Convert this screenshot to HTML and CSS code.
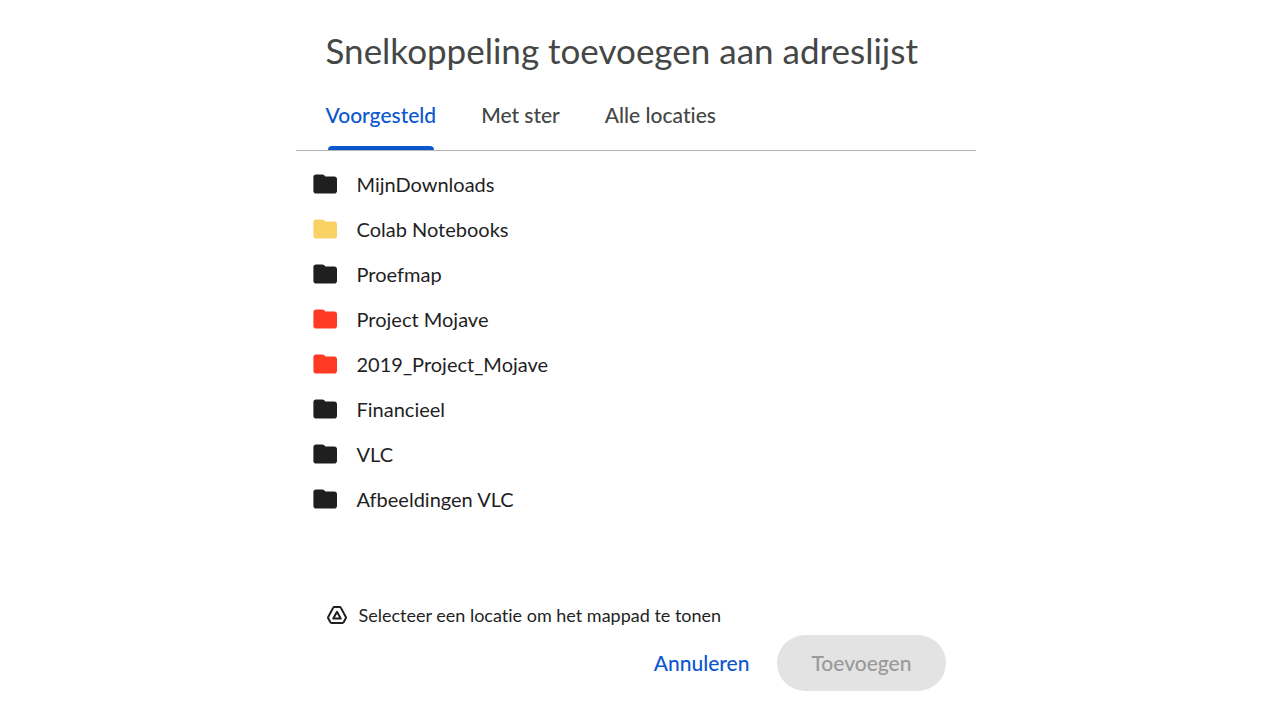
FILE: index.html
```html
<!DOCTYPE html>
<html lang="nl">
<head>
    <meta charset="UTF-8">
    <meta name="viewport" content="width=device-width, initial-scale=1">
    <title>Snelkoppeling toevoegen</title>
    <link rel="stylesheet" href="styles.css">
</head>
<body>
    <!-- shared icons -->
    <svg class="icons" aria-hidden="true">
        <symbol id="folder" viewBox="0 0 24 20">
            <path d="M2.9 0.500h6.500c0.600 0 1.100 0.200 1.600 0.600l1.500 1.500h8.900c1.500 0 2.600 1 2.600 2.400v11.900c0 1.500-1.100 2.600-2.600 2.600H2.900C1.500 19.500 0.400 18.400 0.400 16.900V3.100C0.400 1.600 1.500 0.500 2.900 0.500z"/>
        </symbol>
        <symbol id="drive" viewBox="0 0 20 18">
            <path d="M7.200 1h5.600c0.500 0 0.800 0.200 1 0.600l5 9.400c0.200 0.400 0.200 0.800 0 1.200l-2.300 4.200c-0.200 0.400-0.600 0.600-1 0.600H4.500c-0.400 0-0.800-0.200-1-0.600L1.200 12.200c-0.200-0.400-0.200-0.800 0-1.200l5-9.400c0.200-0.400 0.500-0.600 1-0.600z"/>
            <path d="M10 5.800l3.700 6.700H6.300z"/>
        </symbol>
    </svg>

    <main class="dialog">
        <h1>Snelkoppeling toevoegen aan adreslijst</h1>

        <div class="tabs" role="tablist">
            <button class="tab active" type="button" role="tab" aria-selected="true">Voorgesteld</button>
            <button class="tab" type="button" role="tab" aria-selected="false">Met ster</button>
            <button class="tab" type="button" role="tab" aria-selected="false">Alle locaties</button>
        </div>

        <ul class="folders">
            <li><button class="folder" type="button"><svg class="folder-icon"><use href="#folder"/></svg>MijnDownloads</button></li>
            <li><button class="folder" type="button"><svg class="folder-icon yellow"><use href="#folder"/></svg>Colab Notebooks</button></li>
            <li><button class="folder" type="button"><svg class="folder-icon"><use href="#folder"/></svg>Proefmap</button></li>
            <li><button class="folder" type="button"><svg class="folder-icon red"><use href="#folder"/></svg>Project Mojave</button></li>
            <li><button class="folder" type="button"><svg class="folder-icon red"><use href="#folder"/></svg>2019_Project_Mojave</button></li>
            <li><button class="folder" type="button"><svg class="folder-icon"><use href="#folder"/></svg>Financieel</button></li>
            <li><button class="folder" type="button"><svg class="folder-icon"><use href="#folder"/></svg>VLC</button></li>
            <li><button class="folder" type="button"><svg class="folder-icon"><use href="#folder"/></svg>Afbeeldingen VLC</button></li>
        </ul>

        <p class="path">
            <svg class="drive-icon"><use href="#drive"/></svg>
            Selecteer een locatie om het mappad te tonen
        </p>

        <div class="actions">
            <button class="cancel" type="button">Annuleren</button>
            <button class="add" type="button" disabled>Toevoegen</button>
        </div>
    </main>
</body>
</html>
```
FILE: styles.css
```css
body {
    margin: 0;
    background-color: #ffffff;
    color: #1f1f1f;
    font-family: Lato, sans-serif;
    font-variant-ligatures: none;
}
button {
    margin: 0;
    padding: 0;
    border: none;
    background: none;
    color: inherit;
    font-family: inherit;
    font-size: 21px;
    font-variant-ligatures: none;
    line-height: 24px;
    cursor: pointer;
}
.icons {
    display: none;
}
.dialog {
    max-width: 680px;
    margin: 0 auto;
    padding-top: 28px;
}
h1 {
    margin: 0;
    padding: 0 30px;
    color: #444746;
    font-size: 35px;
    font-weight: normal;
    line-height: 44px;
}
.tabs {
    display: flex;
    gap: 45px;
    margin-top: 8px;
    padding: 0 30px;
    border-bottom: 1px solid #b4b4b4;
}
.tab {
    position: relative;
    padding: 23px 0;
    color: #444746;
    font-weight: 500;
}
.tab.active {
    color: #0b57d0;
}
.tab.active::after {
    content: "";
    position: absolute;
    left: 2px;
    right: 2px;
    bottom: 0;
    height: 4px;
    border-radius: 4px 4px 0 0;
    background-color: #0b57d0;
}
.folders {
    margin: 0;
    padding: 10px 0 0;
    list-style: none;
}
.folder {
    display: flex;
    align-items: center;
    gap: 20px;
    width: 100%;
    height: 45px;
    padding: 0 17px;
    font-size: 20px;
    text-align: left;
}
.folder-icon {
    width: 24px;
    height: 20px;
    fill: #1f1f1f;
}
.folder-icon.yellow {
    fill: #fad165;
}
.folder-icon.red {
    fill: #ff3a24;
}
.path {
    display: flex;
    align-items: center;
    gap: 12px;
    margin: 82px 0 0;
    padding: 0 31px;
    font-size: 18px;
    line-height: 24px;
}
.drive-icon {
    width: 20px;
    height: 18px;
    fill: none;
    stroke: #1f1f1f;
    stroke-width: 2;
    stroke-linejoin: round;
}
.actions {
    display: flex;
    justify-content: flex-end;
    gap: 28px;
    margin-top: 8px;
    padding: 0 30px 24px;
}
.cancel {
    color: #0b57d0;
    font-weight: 500;
}
.add {
    padding: 16px 34px;
    border-radius: 28px;
    background-color: #e3e3e3;
    color: #999999;
    font-weight: 500;
    cursor: default;
}
```
